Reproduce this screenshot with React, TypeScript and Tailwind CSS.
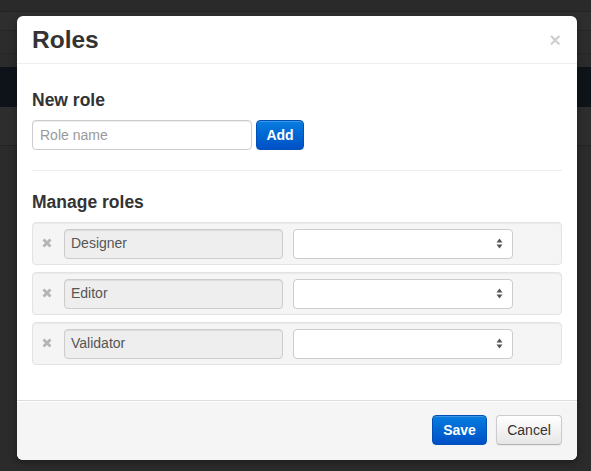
import React from "react";

const font = { fontFamily: '"Liberation Sans", Arial, sans-serif' };

function RemoveIcon() {
  return (
    <svg width="10" height="10" viewBox="0 0 10 10" className="shrink-0 -mt-[2px]">
      <path d="M1.5 1.5 L8.5 8.5 M8.5 1.5 L1.5 8.5" stroke="#b4b4b4" strokeWidth="2.8" strokeLinecap="butt" />
    </svg>
  );
}

function SelectArrows() {
  return (
    <svg width="7" height="11" viewBox="0 0 7 11">
      <path d="M3.5 0.5 L6.5 4.5 L0.5 4.5 Z" fill="#555" />
      <path d="M0.5 6.5 L6.5 6.5 L3.5 10.5 Z" fill="#555" />
    </svg>
  );
}

function RoleRow({ name }: { name: string }) {
  return (
    <div className="h-[43px] flex items-center bg-[#f5f5f5] border border-[#e3e3e3] rounded-[4px] pl-[9px] shadow-[inset_0_1px_1px_rgba(0,0,0,0.05)]">
      <RemoveIcon />
      <div className="ml-[12px] w-[219px] h-[30px] flex items-center px-[6px] bg-[#eeeeee] border border-[#cccccc] rounded-[4px] text-[14px] text-[#555] shadow-[inset_0_1px_1px_rgba(0,0,0,0.075)]">
        {name}
      </div>
      <div className="ml-[10px] w-[220px] h-[30px] flex items-center justify-end pr-[9px] bg-white border border-[#cccccc] rounded-[4px]">
        <SelectArrows />
      </div>
    </div>
  );
}

export default function App() {
  return (
    <div className="relative w-[591px] h-[471px] overflow-hidden flex flex-col bg-[#2b2b2b]" style={font}>
      <div className="h-[11px] bg-[#2a2a2a]" />
      <div className="h-px bg-[#232323]" />
      <div className="h-[18px] bg-[#2e2e2e]" />
      <div className="h-px bg-[#252525]" />
      <div className="h-[22px] bg-[#2c2c2c]" />
      <div className="h-px bg-[#252525]" />
      <div className="h-[13px] bg-[#2b2b2b]" />
      <div className="h-[40px] bg-[#0e1319]" />
      <div className="h-[38px] bg-[#2d2d2d]" />
      <div className="h-px bg-[#222222]" />
      <div className="flex-1 bg-[#2b2b2b]" />

      <div className="absolute left-[17px] top-[16px] w-[560px] bg-white rounded-[6px] shadow-[0_3px_7px_rgba(0,0,0,0.3)] flex flex-col">
        <div className="h-[48px] flex items-center justify-between px-[15px] border-b border-[#eeeeee]">
          <h3 className="text-[24.5px] font-bold text-[#333] leading-none mt-[2px]">Roles</h3>
          <span className="text-[20px] font-bold text-black/20 leading-none mr-[1px] mt-[1px]">×</span>
        </div>

        <div className="px-[15px] pt-[16px] pb-[15px]">
          <h4 className="mt-[10px] mb-[10px] text-[17.5px] leading-[20px] font-bold text-[#333]">New role</h4>
          <div className="flex items-center">
            <div className="w-[220px] h-[30px] flex items-center px-[7px] bg-white border border-[#cccccc] rounded-[4px] text-[14px] text-[#999] shadow-[inset_0_1px_1px_rgba(0,0,0,0.075)]">
              Role name
            </div>
            <button className="ml-[4px] w-[48px] h-[30px] rounded-[4px] text-[14px] font-bold text-white border border-[#0050b8] bg-gradient-to-b from-[#0a7de0] to-[#0050c6] shadow-[inset_0_1px_0_rgba(255,255,255,0.2)]">
              Add
            </button>
          </div>
          <div className="mt-[20px] mb-[21px] h-px bg-[#eeeeee]" />
          <h4 className="mb-[10px] text-[17.5px] leading-[20px] font-bold text-[#333]">Manage roles</h4>
          <div className="flex flex-col gap-[7px] mb-[20px]">
            <RoleRow name="Designer" />
            <RoleRow name="Editor" />
            <RoleRow name="Validator" />
          </div>
        </div>

        <div className="border-t border-[#dddddd] bg-[#f5f5f5] rounded-b-[6px] pt-[14px] pb-[15px] px-[15px] flex justify-end gap-[9px] shadow-[inset_0_1px_0_#ffffff]">
          <button className="w-[55px] h-[30px] rounded-[4px] text-[14px] font-bold text-white border border-[#0050b8] bg-gradient-to-b from-[#0a7de0] to-[#0050c6] shadow-[inset_0_1px_0_rgba(255,255,255,0.2)]">
            Save
          </button>
          <button className="w-[66px] h-[30px] rounded-[4px] text-[14px] text-[#333] border border-[#cccccc] border-b-[#b3b3b3] bg-gradient-to-b from-white to-[#e6e6e6] shadow-[inset_0_1px_0_rgba(255,255,255,0.2),0_1px_2px_rgba(0,0,0,0.05)]">
            Cancel
          </button>
        </div>
      </div>
    </div>
  );
}
